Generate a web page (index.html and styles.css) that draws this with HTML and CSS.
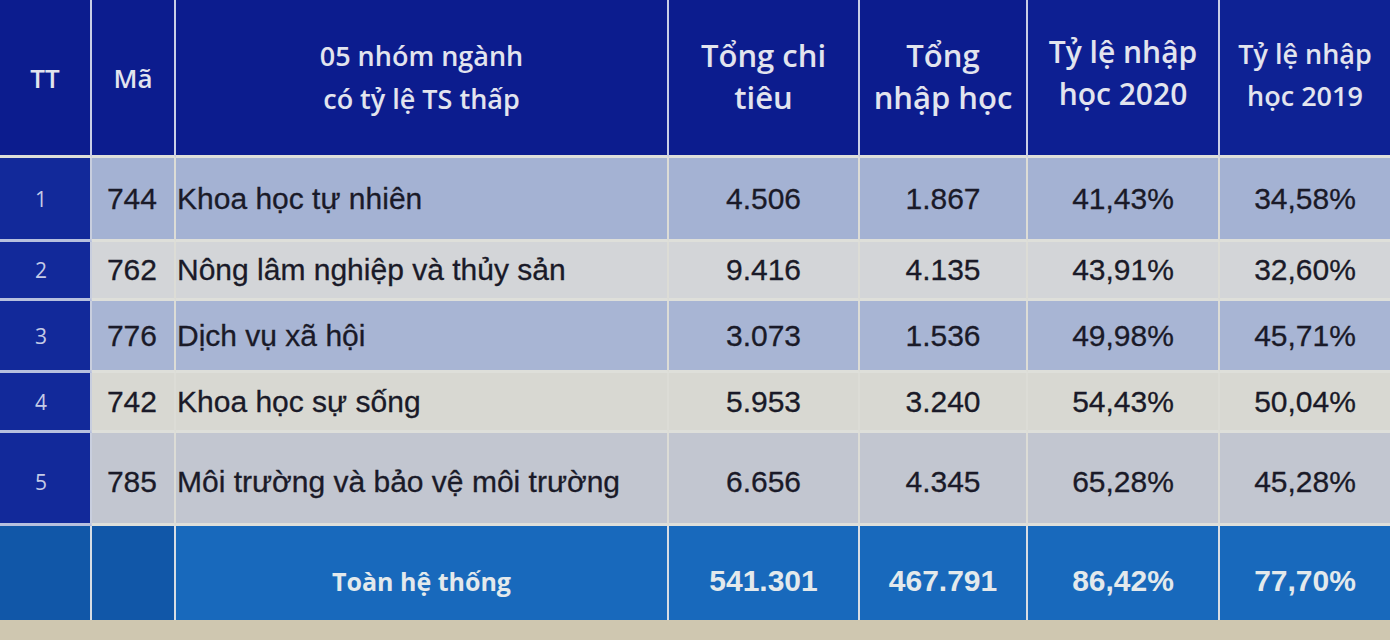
FILE: index.html
```html
<!DOCTYPE html>
<html lang="vi">
<head>
<meta charset="utf-8">
<title>05 nhóm ngành có tỷ lệ TS thấp</title>
<link rel="stylesheet" href="styles.css">
</head>
<body>
<div class="sheet">
  <div class="grid">
    <div class="cell head h-tt">TT</div>
    <div class="cell head h-ma">Mã</div>
    <div class="cell head h-name">05 nhóm ngành<br>có tỷ lệ TS thấp</div>
    <div class="cell head h-big">Tổng chi<br>tiêu</div>
    <div class="cell head h-big">Tổng<br>nhập học</div>
    <div class="cell head h-mid">Tỷ lệ nhập<br>học 2020</div>
    <div class="cell head h-small">Tỷ lệ nhập<br>học 2019</div>

    <div class="cell tt r1">1</div>
    <div class="cell ma r1">744</div>
    <div class="cell name r1">Khoa học tự nhiên</div>
    <div class="cell num r1">4.506</div>
    <div class="cell num r1">1.867</div>
    <div class="cell num r1">41,43%</div>
    <div class="cell num r1 last">34,58%</div>

    <div class="cell tt r2">2</div>
    <div class="cell ma r2">762</div>
    <div class="cell name r2">Nông lâm nghiệp và thủy sản</div>
    <div class="cell num r2">9.416</div>
    <div class="cell num r2">4.135</div>
    <div class="cell num r2">43,91%</div>
    <div class="cell num r2 last">32,60%</div>

    <div class="cell tt r3">3</div>
    <div class="cell ma r3">776</div>
    <div class="cell name r3">Dịch vụ xã hội</div>
    <div class="cell num r3">3.073</div>
    <div class="cell num r3">1.536</div>
    <div class="cell num r3">49,98%</div>
    <div class="cell num r3 last">45,71%</div>

    <div class="cell tt r4">4</div>
    <div class="cell ma r4">742</div>
    <div class="cell name r4">Khoa học sự sống</div>
    <div class="cell num r4">5.953</div>
    <div class="cell num r4">3.240</div>
    <div class="cell num r4">54,43%</div>
    <div class="cell num r4 last">50,04%</div>

    <div class="cell tt r5">5</div>
    <div class="cell ma r5">785</div>
    <div class="cell name r5">Môi trường và bảo vệ môi trường</div>
    <div class="cell num r5">6.656</div>
    <div class="cell num r5">4.345</div>
    <div class="cell num r5">65,28%</div>
    <div class="cell num r5 last">45,28%</div>

    <div class="cell total total-side"></div>
    <div class="cell total total-side"></div>
    <div class="cell total total-label">Toàn hệ thống</div>
    <div class="cell total total-num">541.301</div>
    <div class="cell total total-num">467.791</div>
    <div class="cell total total-num">86,42%</div>
    <div class="cell total total-num last">77,70%</div>
  </div>
</div>
</body>
</html>
```

FILE: styles.css
```css
html, body {
  margin: 0;
  padding: 0;
}

body {
  width: 1390px;
  height: 640px;
  overflow: hidden;
  background: #cdc5ad;
}

.sheet {
  width: 1390px;
  height: 640px;
  background: #cfc7b0;
}

.grid {
  display: grid;
  grid-template-columns: 92px 84px 493px 191px 168px 192px 170px;
  grid-template-rows: 158px 84px 59px 72px 60px 93px 94px;
  width: 1390px;
}

.cell {
  box-sizing: border-box;
  display: flex;
  align-items: center;
  border-right: 2px solid #dcdcd6;
  border-bottom: 3px solid #dedfda;
  font-family: "Liberation Sans", Arial, sans-serif;
  font-size: 30px;
  color: #1a1a28;
  -webkit-text-stroke: 0.3px #1a1a28;
}

.last {
  border-right: 0;
}

/* header */
.head {
  background: #0c1c8e;
  color: #e2e4ee;
  -webkit-text-stroke: 0;
  font-family: "Open Sans", "Noto Sans", sans-serif;
  font-weight: 600;
  justify-content: center;
  text-align: center;
  line-height: 42px;
  padding-bottom: 4px;
  border-right-color: #c9cde6;
}

.h-tt,
.h-ma {
  font-size: 26px;
  padding-bottom: 0;
}

.h-name {
  font-size: 27px;
  line-height: 43px;
  padding-bottom: 2px;
}

.h-big {
  font-size: 31px;
  padding-bottom: 4px;
}

.h-mid {
  font-size: 30px;
  padding-bottom: 10px;
  background: #0d1f92;
}

.h-small {
  border-right: 0;
  background: #0e2294;
  font-size: 27px;
  padding-bottom: 6px;
}

/* body rows */
.tt {
  color: #c4cbe6;
  -webkit-text-stroke: 0;
  font-family: "Open Sans", "Noto Sans", sans-serif;
  font-size: 21px;
  justify-content: center;
  border-right-color: #c8cede;
  border-bottom-color: #b7c0de;
  padding-right: 8px;
}

.ma {
  justify-content: flex-end;
  padding-right: 17px;
}

.name {
  padding-left: 1px;
}

.num {
  justify-content: center;
}

.r1 { background: #a4b2d3; }
.r2 { background: #d3d5d8; }
.r3 { background: #a8b5d4; }
.r4 { background: #d8d8d2; }
.r5 { background: #c2c6d0; }

.tt.r1, .tt.r2, .tt.r3, .tt.r4, .tt.r5 {
  background: #12299a;
}

.r5 {
  padding-top: 8px;
}

/* total row */
.total {
  background: #1869bc;
  color: #e3e9ec;
  -webkit-text-stroke: 0;
  justify-content: center;
  padding-top: 16px;
  border-right-color: #d7dde4;
  border-bottom: 0;
}

.total-side {
  background: #1157a8;
}

.total-label {
  font-family: "Open Sans", "Noto Sans", sans-serif;
  font-weight: 700;
  font-size: 25px;
}

.total-num {
  font-weight: 700;
  font-size: 30px;
}
```
